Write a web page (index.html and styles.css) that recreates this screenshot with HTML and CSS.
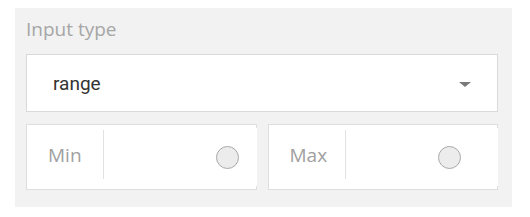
FILE: index.html
```html
<!DOCTYPE html>
<html lang="en">
<head>
    <meta charset="UTF-8">
    <title>Input type</title>
    <link rel="stylesheet" href="styles.css">
</head>
<body>
    <div class="panel">
        <div class="field-label">Input type</div>

        <div class="select">
            <span class="select-value">range</span>
            <span class="select-arrow"></span>
        </div>

        <div class="range-row">
            <div class="range-box">
                <span class="range-label">Min</span>
                <div class="range-track range-track-min">
                    <span class="range-thumb"></span>
                </div>
            </div>
            <div class="range-box">
                <span class="range-label">Max</span>
                <div class="range-track range-track-max">
                    <span class="range-thumb"></span>
                </div>
            </div>
        </div>
    </div>
</body>
</html>
```

FILE: styles.css
```css
* {
    box-sizing: border-box;
    margin: 0;
    padding: 0;
}

body {
    background: #fff;
    font-family: "Open Sans", "Noto Sans", sans-serif;
}

.panel {
    width: 497px;
    height: 199px;
    margin: 8px 0 0 15px;
    padding: 9px 14px 0 11px;
    background: #f2f2f2;
}

.field-label {
    font-size: 19px;
    line-height: 24px;
    color: #a6a6a6;
    margin-bottom: 13px;
}

.select {
    height: 58px;
    display: flex;
    align-items: center;
    justify-content: space-between;
    padding: 0 26px 0 26px;
    background: #fff;
    border: 1px solid #d9d9d9;
}

.select-value {
    font-family: Roboto, "Open Sans", sans-serif;
    font-size: 19px;
    color: #333;
    margin-top: 1px;
}

.select-arrow {
    width: 0;
    height: 0;
    border-left: 6px solid transparent;
    border-right: 6px solid transparent;
    border-top: 5px solid #7a7a7a;
    margin-top: 2px;
}

.range-row {
    display: flex;
    gap: 11px;
    margin-top: 12px;
}

.range-box {
    flex: 1;
    height: 66px;
    display: flex;
    align-items: flex-start;
    background: #fff;
    border: 1px solid #dedede;
}

.range-label {
    width: 77px;
    height: 49px;
    margin-top: 5px;
    padding-left: 21px;
    display: flex;
    align-items: center;
    border-right: 1px solid #e2e2e2;
    font-size: 19px;
    color: #a0a0a0;
}

.range-track {
    flex: 1;
    align-self: stretch;
    margin: 3px -1px 3px 0;
    display: flex;
    align-items: center;
    justify-content: flex-end;
    background: #fff;
}

.range-track-min {
    padding-right: 18px;
}

.range-track-max {
    padding-right: 37px;
}

.range-thumb {
    width: 23px;
    height: 23px;
    border-radius: 50%;
    background: #ececec;
    border: 1px solid #a9a9a9;
}
```
